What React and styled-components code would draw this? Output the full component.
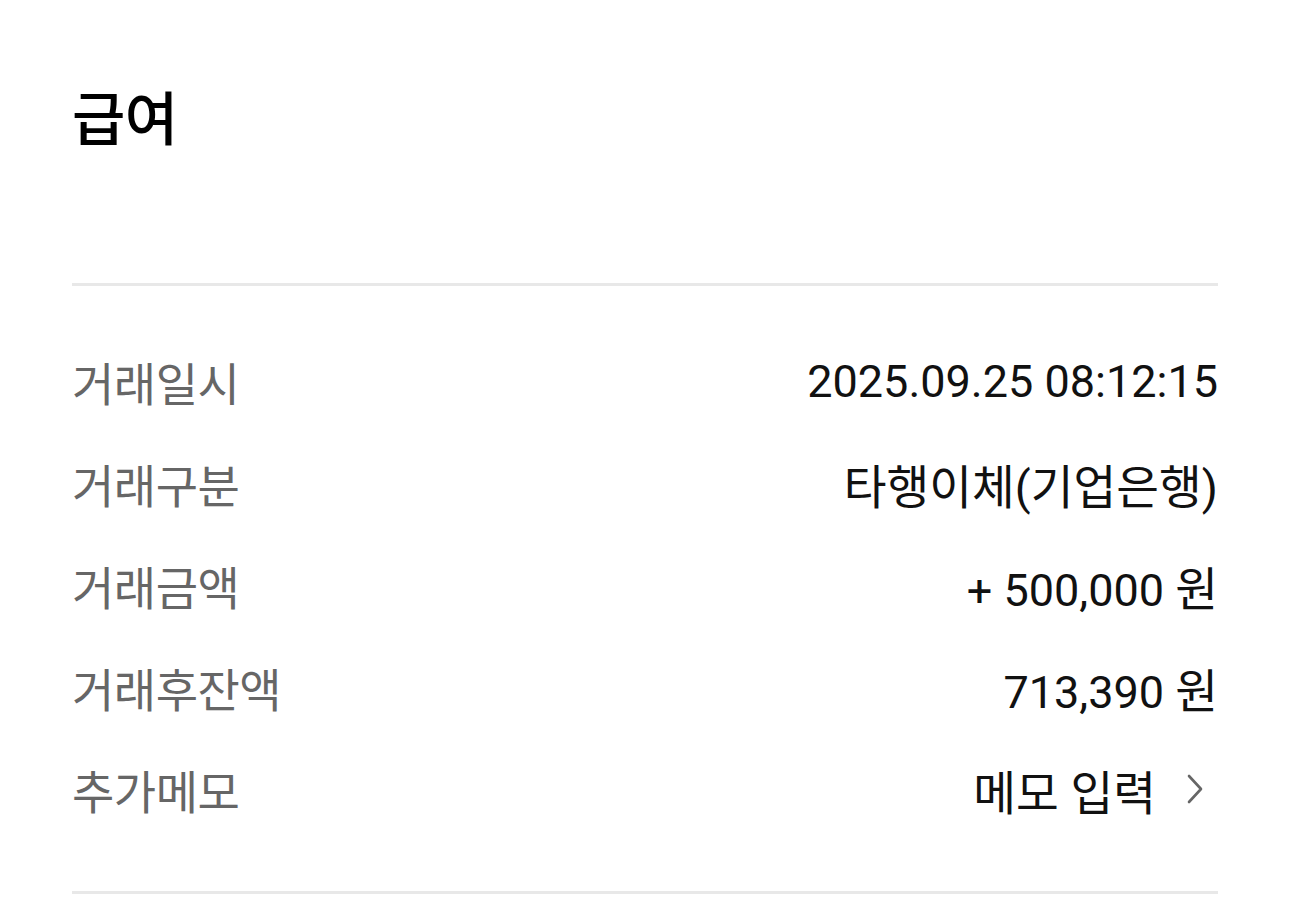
import React from "react";
import styled, { createGlobalStyle } from "styled-components";

const Global = createGlobalStyle`
  html, body { margin: 0; padding: 0; background: #fff; }
  body { font-family: Roboto, "Noto Sans CJK KR", sans-serif; }
`;

const Page = styled.div`
  width: 1290px;
  height: 921px;
  overflow: hidden;
  box-sizing: border-box;
  padding: 0 72px;
  background: #fff;
`;

const Header = styled.header`
  height: 283px;
  box-sizing: border-box;
  padding-top: 78px;
`;

const Title = styled.h1`
  margin: 0;
  font-family: "Noto Sans CJK KR", sans-serif;
  font-weight: 500;
  font-size: 58px;
  line-height: 74px;
  color: #000;
  letter-spacing: -0.5px;
`;

const Divider = styled.div`
  height: 3px;
  background: #e8e8e8;
`;

const List = styled.dl`
  margin: 0;
  padding: 44px 0 51px;
  display: flex;
  flex-direction: column;
`;

const Row = styled.div`
  height: 102px;
  display: flex;
  align-items: center;
  justify-content: space-between;
`;

const Label = styled.dt`
  font-family: "Noto Sans CJK KR", sans-serif;
  font-size: 46px;
  color: #666;
  letter-spacing: -0.5px;
`;

const Value = styled.dd`
  margin: 0;
  display: flex;
  align-items: center;
  gap: 30px;
  font-family: Roboto, "Noto Sans CJK KR", sans-serif;
  font-size: 45px;
  color: #111;
`;

const Hangul = styled.span`
  font-size: 46.5px;
`;

const Chevron = styled.svg`
  width: 18px;
  height: 30px;
  margin-right: 14px;
`;

const rows = [
  ["거래일시", "2025.09.25 08:12:15"],
  ["거래구분", <Hangul>타행이체(기업은행)</Hangul>],
  ["거래금액", <span>+ 500,000 <Hangul>원</Hangul></span>],
  ["거래후잔액", <span>713,390 <Hangul>원</Hangul></span>],
];

export default function App() {
  return (
    <Page>
      <Global />
      <Header>
        <Title>급여</Title>
      </Header>
      <Divider />
      <List>
        {rows.map(([k, v]) => (
          <Row key={k}>
            <Label>{k}</Label>
            <Value>{v}</Value>
          </Row>
        ))}
        <Row>
          <Label>추가메모</Label>
          <Value>
            <Hangul>메모 입력</Hangul>
            <Chevron viewBox="0 0 18 30" fill="none">
              <path d="M3 2 L15 15 L3 28" stroke="#666" strokeWidth="2.6" strokeLinecap="round" strokeLinejoin="round" />
            </Chevron>
          </Value>
        </Row>
      </List>
      <Divider />
    </Page>
  );
}
